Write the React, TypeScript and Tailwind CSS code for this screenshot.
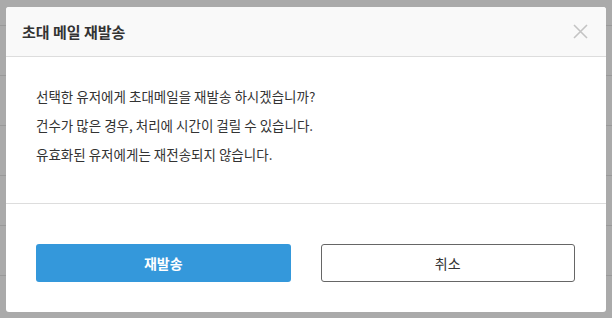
export default function App() {
  const lines = [
    "선택한 유저에게 초대메일을 재발송 하시겠습니까?",
    "건수가 많은 경우, 처리에 시간이 걸릴 수 있습니다.",
    "유효화된 유저에게는 재전송되지 않습니다.",
  ];

  return (
    <div
      className="relative w-[612px] h-[318px] overflow-hidden bg-[#aaaaaa]"
      style={{ fontFamily: '"Noto Sans CJK KR", "Noto Sans", sans-serif' }}
    >
      {/* page rows behind the overlay */}
      <div className="absolute inset-0 flex flex-col">
        <div className="h-[26px] border-b border-[#999999]" />
        {[0, 1, 2, 3, 4].map((i) => (
          <div key={i} className="h-[50px] shrink-0 border-b border-[#999999]" />
        ))}
      </div>

      <div className="absolute left-[6px] top-[7px] w-[600px] h-[305px] flex flex-col bg-white rounded-[3px] overflow-hidden">
        <div className="h-[50px] shrink-0 flex items-center justify-between pl-[16px] pr-[18px] bg-[#f9f9f9] border-b border-[#dddddd]">
          <h2 className="text-[15px] font-bold text-[#333333] leading-none">초대 메일 재발송</h2>
          <button className="w-[16px] h-[16px] flex items-center justify-center" aria-label="close">
            <svg width="15" height="15" viewBox="0 0 15 15">
              <path d="M1 1 L14 14 M14 1 L1 14" stroke="#c4c4c4" strokeWidth="1.6" />
            </svg>
          </button>
        </div>

        <div className="h-[147px] shrink-0 pt-[25px] pl-[30px] border-b border-[#dddddd]">
          {lines.map((l) => (
            <p key={l} className="text-[13.5px] leading-[29px] text-[#333333]">
              {l}
            </p>
          ))}
        </div>

        <div className="flex-1 flex gap-[30px] pt-[40px] pl-[30px] pr-[31px]">
          <button className="w-[255px] h-[38px] rounded-[3px] bg-[#3498db] text-white text-[14px] font-bold">
            재발송
          </button>
          <button className="w-[255px] h-[38px] rounded-[3px] border border-[#666666] bg-white text-[#333333] text-[14px]">
            취소
          </button>
        </div>
      </div>
    </div>
  );
}
